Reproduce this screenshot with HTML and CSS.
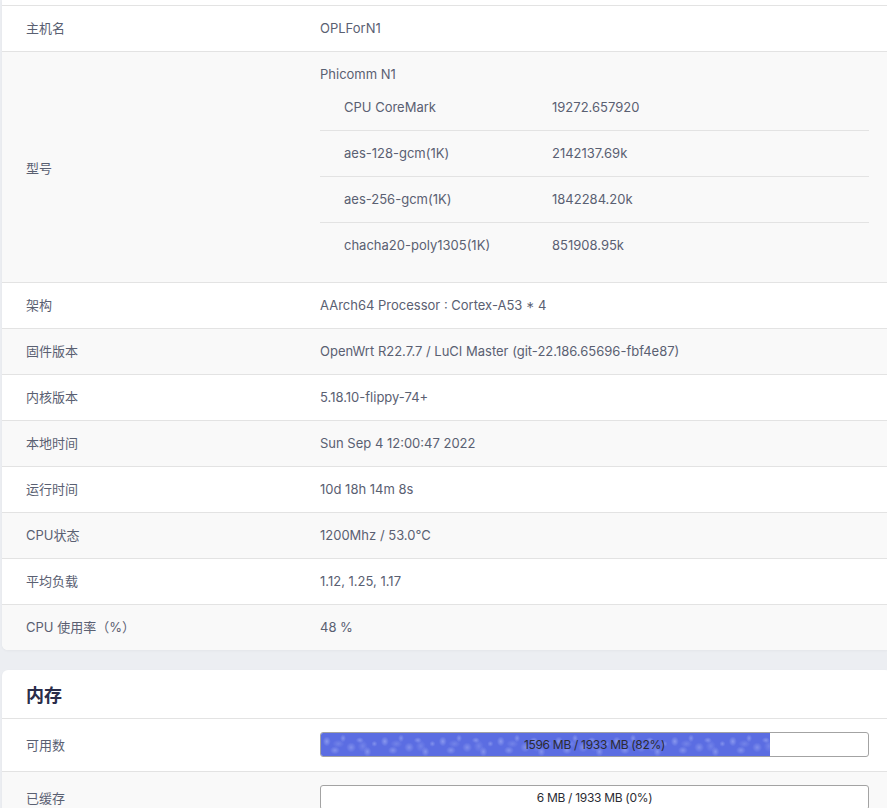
FILE: index.html
```html
<!DOCTYPE html>
<html lang="zh-CN">
<head>
<meta charset="utf-8">
<title>状态</title>
<link rel="stylesheet" href="styles.css">
</head>
<body>
<div class="page">
  <section class="card card-top">
    <div class="row"><div class="label">主机名</div><div class="value">OPLForN1</div></div>
    <div class="row row-alt row-model">
      <div class="label">型号</div>
      <div class="value">
        <div class="model-name">Phicomm N1</div>
        <div class="bench">
          <div class="bench-row"><div class="bench-k">CPU CoreMark</div><div class="bench-v">19272.657920</div></div>
          <div class="bench-row"><div class="bench-k">aes-128-gcm(1K)</div><div class="bench-v">2142137.69k</div></div>
          <div class="bench-row"><div class="bench-k">aes-256-gcm(1K)</div><div class="bench-v">1842284.20k</div></div>
          <div class="bench-row"><div class="bench-k">chacha20-poly1305(1K)</div><div class="bench-v">851908.95k</div></div>
        </div>
      </div>
    </div>
    <div class="row"><div class="label">架构</div><div class="value">AArch64 Processor : Cortex-A53 * 4</div></div>
    <div class="row row-alt"><div class="label">固件版本</div><div class="value">OpenWrt R22.7.7 / LuCI Master (git-22.186.65696-fbf4e87)</div></div>
    <div class="row"><div class="label">内核版本</div><div class="value">5.18.10-flippy-74+</div></div>
    <div class="row row-alt"><div class="label">本地时间</div><div class="value">Sun Sep 4 12:00:47 2022</div></div>
    <div class="row"><div class="label">运行时间</div><div class="value">10d 18h 14m 8s</div></div>
    <div class="row row-alt"><div class="label">CPU状态</div><div class="value">1200Mhz / 53.0°C</div></div>
    <div class="row"><div class="label">平均负载</div><div class="value">1.12, 1.25, 1.17</div></div>
    <div class="row row-alt"><div class="label">CPU 使用率（%）</div><div class="value">48 %</div></div>
  </section>

  <section class="card card-mem">
    <h3 class="card-title">内存</h3>
    <div class="row row-bar"><div class="label">可用数</div><div class="value">
      <div class="bar"><div class="bar-fill" style="width:82%"></div><span class="bar-text">1596 MB / 1933 MB (82%)</span></div>
    </div></div>
    <div class="row row-bar row-alt"><div class="label">已缓存</div><div class="value">
      <div class="bar"><div class="bar-fill" style="width:0%"></div><span class="bar-text">6 MB / 1933 MB (0%)</span></div>
    </div></div>
  </section>
</div>
</body>
</html>
```

FILE: styles.css
```css
html, body {
  margin: 0;
  padding: 0;
  height: 100%;
  overflow: hidden;
}
body {
  background: #eceef2;
  font-family: Inter, "Noto Sans CJK SC", sans-serif;
  font-size: 13px;
  color: #5a6072;
}
.page {
  padding-left: 2px;
  width: 889px;
}
.card {
  background: #fff;
  border-radius: 0 0 6px 6px;
  box-shadow: 0 1px 3px rgba(0,0,0,0.04);
  overflow: hidden;
}
.card-top {
  padding-top: 5px;
}
.card-mem {
  margin-top: 20px;
  border-radius: 6px 6px 0 0;
}
.card-title {
  margin: 0;
  height: 48px;
  padding: 0 24px;
  display: flex;
  align-items: center;
  font-size: 18px;
  font-weight: 700;
  color: #2a2d4a;
}
.row {
  display: grid;
  grid-template-columns: 294px 1fr;
  align-items: center;
  min-height: 43px;
  padding: 0 22px 2px 24px;
  border-top: 1px solid #e3e3e3;
  background: #fff;
}
.row-alt {
  background: #f9f9f9;
}
.row-model {
  padding-top: 14px;
  padding-bottom: 14px;
}
.model-name {
  line-height: 17px;
  margin-bottom: 1px;
}
.bench-row {
  display: grid;
  grid-template-columns: 208px 1fr;
  align-items: center;
  height: 44px;
  padding-left: 24px;
  padding-bottom: 1px;
  border-top: 1px solid #e3e3e3;
}
.bench-row:first-child {
  border-top: 1px solid transparent;
}
.row-bar {
  min-height: 50px;
  padding-bottom: 2px;
}
.bar {
  position: relative;
  height: 23px;
  border: 1px solid #a3a3a3;
  border-radius: 3px;
  background: #fff;
  overflow: hidden;
}
.bar-fill {
  height: 100%;
  background-color: #5b6de2;
  background-image:
    radial-gradient(ellipse 4px 5px at 10% 35%, rgba(200,210,255,0.42), transparent),
    radial-gradient(ellipse 5px 4px at 24% 72%, rgba(200,210,255,0.36), transparent),
    radial-gradient(ellipse 3px 4px at 38% 22%, rgba(200,210,255,0.36), transparent),
    radial-gradient(ellipse 5px 5px at 52% 60%, rgba(200,210,255,0.34), transparent),
    radial-gradient(ellipse 4px 3px at 67% 30%, rgba(200,210,255,0.38), transparent),
    radial-gradient(ellipse 4px 5px at 80% 78%, rgba(200,210,255,0.36), transparent),
    radial-gradient(ellipse 3px 3px at 92% 45%, rgba(200,210,255,0.36), transparent),
    radial-gradient(ellipse 6px 4px at 30% 45%, rgba(200,210,255,0.22), transparent),
    radial-gradient(ellipse 5px 6px at 72% 55%, rgba(200,210,255,0.22), transparent);
  background-size: 58px 24px;
}
.bar-text {
  position: absolute;
  inset: 0;
  display: flex;
  align-items: center;
  justify-content: center;
  font-size: 12px;
  color: #2b2b33;
  letter-spacing: -0.3px;
}
```
